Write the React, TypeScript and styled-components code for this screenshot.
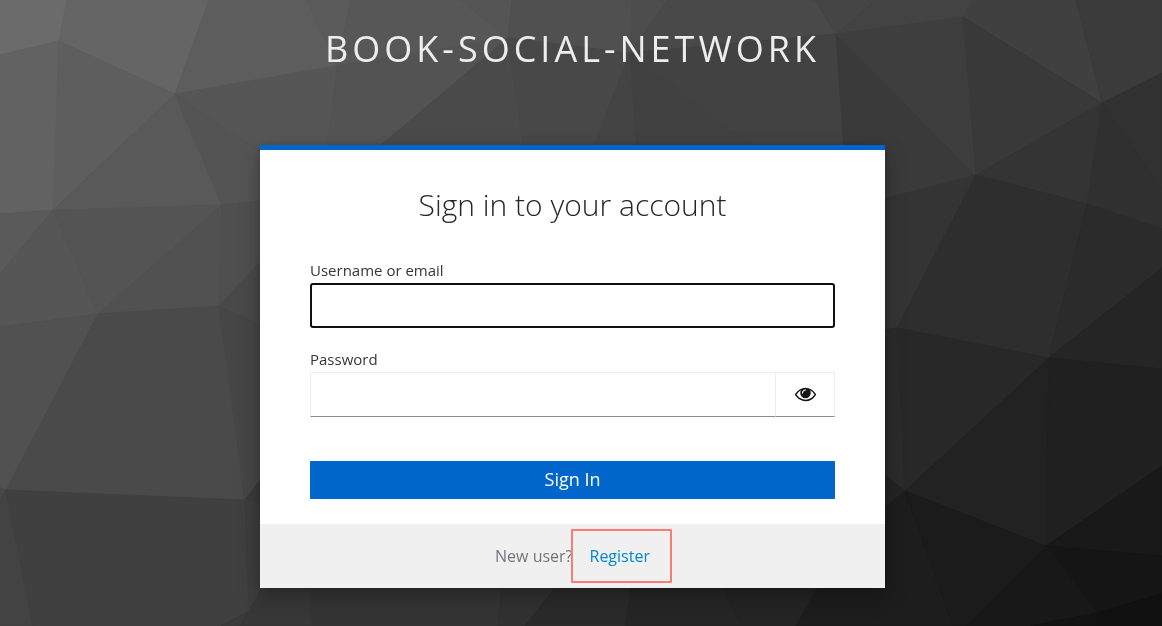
import React, { useState } from "react";
import styled, { createGlobalStyle } from "styled-components";

const GlobalStyle = createGlobalStyle`
  *, *::before, *::after { box-sizing: border-box; }
  body {
    margin: 0;
    background: #393939;
    color: #363636;
    font-family: "Open Sans", "Liberation Sans", sans-serif;
  }
`;

const Backdrop = styled.svg`
  position: fixed;
  inset: 0;
  z-index: -1;
  width: 100%;
  height: 100%;
`;

const Page = styled.div`
  min-height: 100vh;
  padding: 0 17px 38px 0;
  display: flex;
  flex-direction: column;
  align-items: center;
`;

const Brand = styled.header`
  padding: 24px 20px 71px;
  color: #ededed;
  font-size: 36px;
  line-height: 50px;
  letter-spacing: 4px;
  text-transform: uppercase;
  text-align: center;
`;

const Card = styled.main`
  width: 100%;
  max-width: 625px;
  border-top: 5px solid #0066cc;
  background: #fff;
  box-shadow: 0 8px 20px rgba(3, 3, 3, 0.28), 0 0 8px rgba(3, 3, 3, 0.12);
`;

const Title = styled.h1`
  margin: 0;
  padding: 35px 20px 34px;
  color: #262626;
  font-size: 30px;
  font-weight: 300;
  line-height: 40px;
  text-align: center;
`;

const Form = styled.form`
  display: flex;
  flex-direction: column;
  padding: 0 50px 25px;
`;

const Field = styled.div<{ $gap: number }>`
  display: flex;
  flex-direction: column;
  margin-bottom: ${(p) => p.$gap}px;
`;

const Label = styled.label`
  margin-bottom: 2px;
  font-size: 15px;
  line-height: 22px;
`;

const TextInput = styled.input<{ $active?: boolean }>`
  min-width: 0;
  width: 100%;
  height: 45px;
  padding: 6px 10px;
  border: ${(p) => (p.$active ? "2px solid #101010" : "1px solid #ededed")};
  border-bottom-color: ${(p) => (p.$active ? "#101010" : "#8a8d90")};
  border-radius: ${(p) => (p.$active ? 3 : 0)}px;
  background: #fff;
  color: #151515;
  font: inherit;
  font-size: 16px;
  outline: none;
`;

const InputGroup = styled.div`
  display: flex;
`;

const RevealButton = styled.button`
  display: flex;
  flex: none;
  align-items: center;
  justify-content: center;
  width: 59px;
  height: 45px;
  padding: 0;
  border: 1px solid #ededed;
  border-left: 0;
  border-bottom-color: #8a8d90;
  background: #fff;
  color: #151515;
  cursor: pointer;
`;

const SubmitButton = styled.button`
  height: 38px;
  padding: 0 0 2px;
  border: 0;
  border-radius: 1px;
  background: #0066cc;
  color: #fff;
  font-family: inherit;
  font-size: 18px;
  line-height: 24px;
  cursor: pointer;
`;

const Footer = styled.footer`
  display: flex;
  align-items: center;
  justify-content: center;
  gap: 17px;
  height: 64px;
  background: #f0f0f0;
  color: #72767b;
  font-size: 16px;
  line-height: 24px;
`;

const RegisterLink = styled.a`
  position: relative;
  color: #0088ce;
  text-decoration: none;

  &::after {
    content: "";
    position: absolute;
    inset: -15px -22px -15px -19px;
    border: 2px solid #fa7d75;
    border-radius: 1px;
    pointer-events: none;
  }
`;

const facets: [string, string][] = [
  ["0,0 67,0 59,41 0,55", "#6b6b6b"],
  ["67,0 209,0 175,94 59,41", "#656565"],
  ["209,0 307,0 337,66 175,94", "#5d5d5d"],
  ["307,0 351,0 337,66", "#5b5b5b"],
  ["59,41 53,210 0,214 0,55", "#626262"],
  ["59,41 175,94 53,210", "#5e5e5e"],
  ["175,94 222,205 53,210", "#595959"],
  ["175,94 337,66 327,150 257,150", "#565656"],
  ["175,94 262,153 262,201 222,205", "#545454"],
  ["0,214 53,210 0,274", "#5a5a5a"],
  ["53,210 98,314 0,327 0,274", "#565656"],
  ["53,210 222,205 98,314", "#545454"],
  ["222,205 219,306 98,314", "#515151"],
  ["222,205 262,201 262,260 219,306", "#4f4f4f"],
  ["219,306 262,260 262,326", "#494949"],
  ["98,314 6,490 0,488 0,327", "#515151"],
  ["98,314 219,306 245,500 6,490", "#4a4a4a"],
  ["219,306 262,326 262,478 245,500", "#464646"],
  ["6,490 0,500 0,488", "#494949"],
  ["6,490 33,626 0,626 0,500", "#434343"],
  ["6,490 245,500 249,611 221,626 33,626", "#404040"],
  ["245,500 262,478 262,504", "#3a3a3a"],
  ["245,500 262,504 262,588 249,611", "#3d3d3d"],
  ["249,611 240,626 221,626", "#3a3a3a"],
  ["249,611 262,588 312,588 312,626 240,626", "#373737"],
  ["351,0 460,0 508,38 337,66", "#575757"],
  ["460,0 512,0 508,38", "#555555"],
  ["337,66 508,38 380,150 327,150", "#535353"],
  ["508,38 524,150 375,150", "#4a4a4a"],
  ["512,0 632,0 630,53 508,38", "#505050"],
  ["508,38 630,53 592,150 524,150", "#484848"],
  ["632,0 668,0 630,53", "#4d4d4d"],
  ["668,0 815,0 836,34 630,53", "#494949"],
  ["630,53 637,150 592,150", "#444444"],
  ["630,53 760,150 637,150", "#414141"],
  ["630,53 836,34 844,150 760,150", "#424242"],
  ["815,0 876,0 836,34", "#454545"],
  ["876,0 973,0 963,17 836,34", "#434343"],
  ["836,34 976,175 885,199 844,150", "#3a3a3a"],
  ["836,34 963,17 976,175", "#3e3e3e"],
  ["973,0 1076,0 1102,103 963,17", "#404040"],
  ["1076,0 1162,0 1162,73 1102,103", "#3b3b3b"],
  ["963,17 1102,103 976,175", "#393939"],
  ["1102,103 1087,204 976,175", "#343434"],
  ["1102,103 1162,73 1162,190", "#313131"],
  ["1102,103 1162,190 1162,229 1087,204", "#303030"],
  ["976,175 897,328 883,331 883,199", "#343434"],
  ["976,175 1087,204 1049,358 897,328", "#2e2e2e"],
  ["1087,204 1162,229 1162,268 1049,358", "#2b2b2b"],
  ["1162,268 1162,369 1049,358", "#252525"],
  ["897,328 905,491 883,473 883,330", "#2b2b2b"],
  ["897,328 1049,358 905,491", "#282828"],
  ["1049,358 1046,546 905,491", "#222222"],
  ["1049,358 1162,369 1162,466 1046,546", "#202020"],
  ["905,491 883,509 883,473", "#232323"],
  ["905,491 953,626 795,626 817,580 883,509", "#1d1d1d"],
  ["905,491 1046,546 966,626 953,626", "#1b1b1b"],
  ["1046,546 1162,466 1162,556", "#191919"],
  ["1046,546 1162,556 1162,594 1097,613", "#151515"],
  ["1046,546 1097,613 1030,626 966,626", "#181818"],
  ["1097,613 1097,626 1030,626", "#131313"],
  ["1097,613 1162,594 1162,626 1097,626", "#111111"],
  ["312,580 503,580 498,626 312,626", "#343434"],
  ["503,580 561,580 525,626 498,626", "#313131"],
  ["561,580 633,580 625,626 525,626", "#2a2a2a"],
  ["633,580 720,580 742,626 625,626", "#252525"],
  ["720,580 821,580 795,626 742,626", "#242424"],
];

function FacetedBackdrop() {
  return (
    <Backdrop viewBox="0 0 1162 626" preserveAspectRatio="xMidYMid slice" aria-hidden="true">
      {facets.map(([points, fill]) => (
        <polygon key={points} points={points} fill={fill} stroke={fill} strokeWidth="1" />
      ))}
    </Backdrop>
  );
}

function EyeIcon() {
  return (
    <svg width="21" height="21" viewBox="0 64 1792 1792" fill="currentColor" aria-hidden="true">
      <path d="M1664 960q-152-236-381-353 61 104 61 225 0 185-131.5 316.5t-316.5 131.5-316.5-131.5-131.5-316.5q0-121 61-225-229 117-381 353 133 205 333.5 326.5t434.5 121.5 434.5-121.5 333.5-326.5zm-720-384q0-20-14-34t-34-14q-125 0-214.5 89.5t-89.5 214.5q0 20 14 34t34 14 34-14 14-34q0-86 61-147t147-61q20 0 34-14t14-34zm848 384q0 34-20 69-140 230-376.5 368.5t-499.5 138.5-499.5-139-376.5-368q-20-35-20-69t20-69q140-229 376.5-368t499.5-139 499.5 139 376.5 368q20 35 20 69z" />
    </svg>
  );
}

export default function App() {
  const [revealed, setRevealed] = useState(false);

  return (
    <>
      <GlobalStyle />
      <FacetedBackdrop />
      <Page>
        <Brand>book-social-network</Brand>
        <Card>
          <Title>Sign in to your account</Title>
          <Form onSubmit={(e) => e.preventDefault()}>
            <Field $gap={20}>
              <Label htmlFor="username">Username or email</Label>
              <TextInput id="username" name="username" type="text" autoComplete="username" $active />
            </Field>
            <Field $gap={44}>
              <Label htmlFor="password">Password</Label>
              <InputGroup>
                <TextInput
                  id="password"
                  name="password"
                  type={revealed ? "text" : "password"}
                  autoComplete="current-password"
                />
                <RevealButton
                  type="button"
                  aria-label="Show password"
                  aria-pressed={revealed}
                  onClick={() => setRevealed(!revealed)}
                >
                  <EyeIcon />
                </RevealButton>
              </InputGroup>
            </Field>
            <SubmitButton type="submit">Sign In</SubmitButton>
          </Form>
          <Footer>
            <span>New user?</span>
            <RegisterLink href="#register">Register</RegisterLink>
          </Footer>
        </Card>
      </Page>
    </>
  );
}
